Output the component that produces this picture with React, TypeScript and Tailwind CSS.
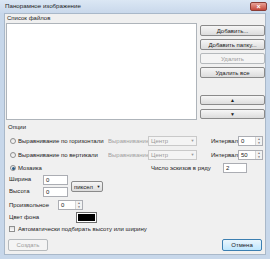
import React from 'react';

const font = { fontFamily: '"Liberation Sans", Arial, sans-serif' };

function Btn({ label, disabled, focused, className = '' }: { label: React.ReactNode; disabled?: boolean; focused?: boolean; className?: string }) {
  return (
    <div
      className={`flex items-center justify-center rounded-[2px] border text-[6px] leading-none ${
        disabled
          ? 'border-[#b5b9bc] bg-[#f4f4f4] text-[#9a9a9a]'
          : focused
          ? 'border-[#3c7fb1] bg-gradient-to-b from-[#eaf6fd] to-[#bee6fd] text-[#1a1a1a]'
          : 'border-[#8a8a8a] bg-gradient-to-b from-[#f6f6f6] to-[#dcdcdc] text-[#1a1a1a]'
      } ${className}`}
    >
      {label}
    </div>
  );
}

function Spin({ value, className = '' }: { value: string; className?: string }) {
  return (
    <div className={`flex h-[10px] border border-[#abadb3] bg-white ${className}`}>
      <div className="flex-1 pl-[2px] text-[6px] leading-[8px] text-[#1a1a1a]">{value}</div>
      <div className="flex w-[7px] flex-col border-l border-[#d5d5d5] bg-[#f2f2f2]">
        <div className="flex flex-1 items-center justify-center text-[3px] leading-none text-[#707070]">▲</div>
        <div className="flex flex-1 items-center justify-center text-[3px] leading-none text-[#707070]">▼</div>
      </div>
    </div>
  );
}

function Combo({ value, disabled, className = '' }: { value: string; disabled?: boolean; className?: string }) {
  return (
    <div
      className={`flex items-center border ${
        disabled ? 'border-[#c9c9c9] bg-[#f4f4f4] text-[#9a9a9a]' : 'border-[#8a8a8a] bg-gradient-to-b from-[#f6f6f6] to-[#dcdcdc] text-[#1a1a1a]'
      } ${className}`}
    >
      <div className="flex-1 pl-[2px] text-[6px] leading-none">{value}</div>
      <div className="w-[7px] text-center text-[4px] leading-none">▼</div>
    </div>
  );
}

function Radio({ checked }: { checked?: boolean }) {
  return (
    <div className="flex h-[6px] w-[6px] shrink-0 items-center justify-center rounded-full border border-[#8e8f8f] bg-gradient-to-b from-[#e6e6e6] to-[#fafafa]">
      {checked && <div className="h-[3px] w-[3px] rounded-full bg-[#2a5b86]" />}
    </div>
  );
}

export default function App() {
  return (
    <div className="flex h-[259px] w-[270px] flex-col bg-[#c7d7ea] text-[6px] text-[#222]" style={font}>
      {/* Title bar */}
      <div className="flex h-[13px] items-center bg-gradient-to-b from-[#dbe7f4] to-[#c9d8eb] pl-[5px] pr-[3px]">
        <div className="flex-1 text-[6.2px] leading-none text-[#1e1e1e]">Панорамное изображение</div>
        <div className="flex h-[9px] w-[17px] items-center justify-center rounded-[2px] border border-[#8a3d36] bg-gradient-to-b from-[#e7a197] to-[#c4473a] text-[7px] font-bold leading-none text-white">
          ×
        </div>
      </div>

      {/* Client area */}
      <div className="mx-[4px] mb-[4px] flex flex-1 flex-col border border-[#a9b8c9] bg-[#f0f0f0]">
        <div className="h-[9px] pl-[2px] leading-[9px]">Список файлов</div>

        <div className="flex gap-[3px] pl-[1px]">
          <div className="h-[97px] w-[191px] border border-[#aeb4ba] bg-white" />
          <div className="flex w-[65px] flex-col pt-[2px]">
            <Btn label="Добавить..." className="h-[11px]" />
            <Btn label="Добавить папку..." className="mt-[3px] h-[11px]" />
            <Btn label="Удалить" disabled className="mt-[3px] h-[11px]" />
            <Btn label="Удалить все" className="mt-[3px] h-[11px]" />
            <Btn label={<span className="text-[5px]">▲</span>} className="mt-[17px] h-[10px]" />
            <Btn label={<span className="text-[5px]">▼</span>} className="mt-[4px] h-[10px]" />
          </div>
        </div>

        <div className="mt-[3px] h-[9px] pl-[3px] leading-[9px]">Опции</div>

        {/* Alignment rows */}
        <div className="mt-[2px] flex h-[14px] items-center pl-[5px]">
          <div className="flex w-[98px] items-center gap-[2px]">
            <Radio />
            <span className="whitespace-nowrap">Выравнивание по горизонтали</span>
          </div>
          <div className="w-[40px] whitespace-nowrap text-[#a0a0a0]">Выравнивание:</div>
          <Combo value="Центр" disabled className="h-[10px] w-[49px]" />
          <div className="ml-[14px] w-[27px] whitespace-nowrap">Интервал</div>
          <Spin value="0" className="w-[25px]" />
        </div>
        <div className="flex h-[14px] items-center pl-[5px]">
          <div className="flex w-[98px] items-center gap-[2px]">
            <Radio />
            <span className="whitespace-nowrap">Выравнивание по вертикали</span>
          </div>
          <div className="w-[40px] whitespace-nowrap text-[#a0a0a0]">Выравнивание:</div>
          <Combo value="Центр" disabled className="h-[10px] w-[49px]" />
          <div className="ml-[14px] w-[27px] whitespace-nowrap">Интервал</div>
          <Spin value="50" className="w-[25px]" />
        </div>
        <div className="flex h-[12px] items-center pl-[5px]">
          <div className="flex w-[141px] items-center gap-[2px]">
            <Radio checked />
            <span>Мозаика</span>
          </div>
          <div className="w-[72px] whitespace-nowrap">Число эскизов в ряду</div>
          <div className="h-[10px] w-[24px] border border-[#abadb3] bg-white pl-[2px] leading-[8px]">2</div>
        </div>

        {/* Size */}
        <div className="flex pl-[4px]">
          <div className="flex flex-col">
            <div className="flex h-[11px] items-center">
              <div className="w-[34px]">Ширина</div>
              <div className="h-[10px] w-[25px] border border-[#abadb3] bg-white pl-[2px] leading-[8px]">0</div>
            </div>
            <div className="mt-[1px] flex h-[11px] items-center">
              <div className="w-[34px]">Высота</div>
              <div className="h-[10px] w-[25px] border border-[#abadb3] bg-white pl-[2px] leading-[8px]">0</div>
            </div>
          </div>
          <Combo value="пиксел" className="ml-[3px] mt-[7px] h-[11px] w-[32px] rounded-[2px]" />
        </div>

        <div className="mt-[2px] flex h-[12px] items-center pl-[4px]">
          <div className="w-[49px]">Произвольное</div>
          <Spin value="0" className="w-[25px]" />
        </div>
        <div className="flex h-[12px] items-center pl-[4px]">
          <div className="w-[67px]">Цвет фона</div>
          <div className="h-[11px] w-[21px] border border-[#6d6d6d] bg-white p-[1px]">
            <div className="h-full w-full bg-black" />
          </div>
        </div>
        <div className="flex h-[12px] items-center gap-[3px] pl-[4px]">
          <div className="h-[6px] w-[6px] border border-[#8e8f8f] bg-gradient-to-b from-[#e0e0e0] to-[#fbfbfb]" />
          <span className="whitespace-nowrap">Автоматически подбирать высоту или ширину</span>
        </div>

        <div className="mt-auto mb-[3px] flex justify-between px-[3px]">
          <Btn label="Создать" disabled className="h-[12px] w-[40px]" />
          <Btn label="Отмена" focused className="h-[12px] w-[40px]" />
        </div>
      </div>
    </div>
  );
}
